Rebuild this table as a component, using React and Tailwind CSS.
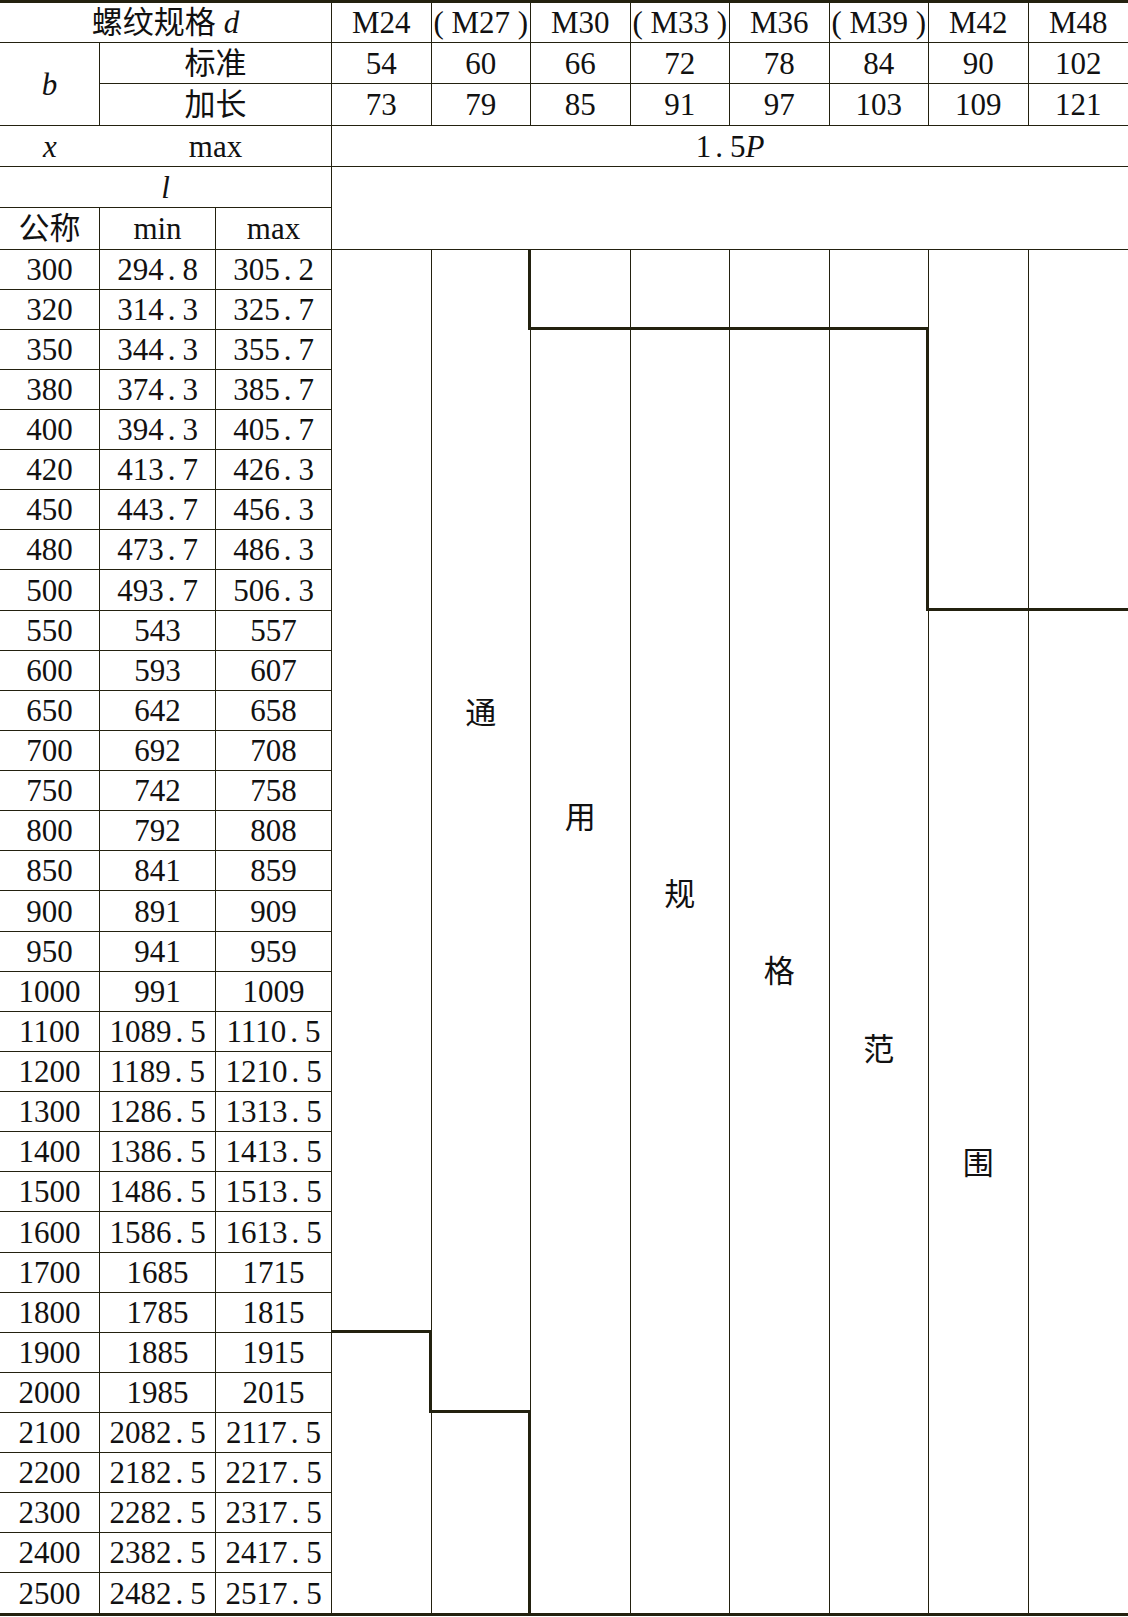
import React from "react";

const rows = [
  [300, "294.8", "305.2"],
  [320, "314.3", "325.7"],
  [350, "344.3", "355.7"],
  [380, "374.3", "385.7"],
  [400, "394.3", "405.7"],
  [420, "413.7", "426.3"],
  [450, "443.7", "456.3"],
  [480, "473.7", "486.3"],
  [500, "493.7", "506.3"],
  [550, "543", "557"],
  [600, "593", "607"],
  [650, "642", "658"],
  [700, "692", "708"],
  [750, "742", "758"],
  [800, "792", "808"],
  [850, "841", "859"],
  [900, "891", "909"],
  [950, "941", "959"],
  [1000, "991", "1009"],
  [1100, "1089.5", "1110.5"],
  [1200, "1189.5", "1210.5"],
  [1300, "1286.5", "1313.5"],
  [1400, "1386.5", "1413.5"],
  [1500, "1486.5", "1513.5"],
  [1600, "1586.5", "1613.5"],
  [1700, "1685", "1715"],
  [1800, "1785", "1815"],
  [1900, "1885", "1915"],
  [2000, "1985", "2015"],
  [2100, "2082.5", "2117.5"],
  [2200, "2182.5", "2217.5"],
  [2300, "2282.5", "2317.5"],
  [2400, "2382.5", "2417.5"],
  [2500, "2482.5", "2517.5"],
];

const sizes = ["M24", "( M27 )", "M30", "( M33 )", "M36", "( M39 )", "M42", "M48"];
const standard = ["54", "60", "66", "72", "78", "84", "90", "102"];
const longer = ["73", "79", "85", "91", "97", "103", "109", "121"];

// numbers in the source use a wide decimal point
const Num = ({ value }) => {
  const parts = String(value).split(".");
  if (parts.length < 2) return <span>{value}</span>;
  return (
    <span className="whitespace-nowrap">
      {parts[0]}
      <span className="ml-[4px] mr-[7px]">.</span>
      {parts[1]}
    </span>
  );
};

const cell = "flex items-center justify-center whitespace-nowrap border-[#23210f]";

const App = () => {
  return (
    <div className="w-[1128px] h-[1617px] bg-white text-[#111] font-['Liberation_Serif','Noto_Sans_CJK_SC',serif] text-[31px] leading-none">
      <div className="grid grid-cols-[100px_116px_116px_repeat(8,1fr)] grid-rows-[40px_41px_42px_41px_41px_42px_repeat(8,40px)_41px_repeat(7,40px)_41px_repeat(7,40px)_41px_repeat(9,40px)] border-t-[3px] border-b-[3px] border-[#23210f]">
        {/* header */}
        <div className={`${cell} col-span-3 border-r border-b`}>
          螺纹规格 <span className="italic ml-[8px]">d</span>
        </div>
        {sizes.map((s, i) => (
          <div key={"s" + i} className={`${cell} border-b ${i === 7 ? "" : "border-r"}`}>
            {s}
          </div>
        ))}

        <div className={`${cell} row-span-2 border-r border-b italic`}>b</div>
        <div className={`${cell} col-span-2 border-r border-b`}>标准</div>
        {standard.map((v, i) => (
          <div key={"b" + i} className={`${cell} border-b ${i === 7 ? "" : "border-r"}`}>
            {v}
          </div>
        ))}
        <div className={`${cell} col-span-2 border-r border-b`}>加长</div>
        {longer.map((v, i) => (
          <div key={"l" + i} className={`${cell} border-b ${i === 7 ? "" : "border-r"}`}>
            {v}
          </div>
        ))}

        <div className={`${cell} border-b italic`}>x</div>
        <div className={`${cell} col-span-2 border-r border-b`}>max</div>
        <div className={`${cell} col-span-8 border-b`}>
          <span className="whitespace-nowrap">
            1<span className="ml-[4px] mr-[7px]">.</span>5<span className="italic">P</span>
          </span>
        </div>

        <div className={`${cell} col-span-3 border-r border-b italic`}>l</div>
        <div className={`${cell} col-span-8 row-span-2 border-b`} />
        <div className={`${cell} border-r border-b`}>公称</div>
        <div className={`${cell} border-r border-b`}>min</div>
        <div className={`${cell} border-r border-b`}>max</div>

        {/* range columns, split where the thick boundary runs */}
        <div className="col-start-4 row-start-7 row-span-27 border-r border-b-[3px] border-[#23210f]" />
        <div className="col-start-4 row-start-34 row-span-2 border-r-[3px] border-[#23210f]" />
        <div className="col-start-4 row-start-36 row-span-5 border-r border-[#23210f]" />

        <div className="col-start-5 row-start-7 row-span-2 border-r-[3px] border-[#23210f]" />
        <div className="col-start-5 row-start-9 row-span-27 flex justify-center pt-[368px] border-r border-b-[3px] border-[#23210f]">
          <span className="h-[31px]">通</span>
        </div>
        <div className="col-start-5 row-start-36 row-span-5 border-r-[3px] border-[#23210f]" />

        <div className="col-start-6 row-start-7 row-span-2 border-r border-b-[3px] border-[#23210f]" />
        <div className="col-start-6 row-start-9 row-span-32 flex justify-center pt-[472px] border-r border-[#23210f]">
          <span className="h-[31px]">用</span>
        </div>

        <div className="col-start-7 row-start-7 row-span-2 border-r border-b-[3px] border-[#23210f]" />
        <div className="col-start-7 row-start-9 row-span-32 flex justify-center pt-[549px] border-r border-[#23210f]">
          <span className="h-[31px]">规</span>
        </div>

        <div className="col-start-8 row-start-7 row-span-2 border-r border-b-[3px] border-[#23210f]" />
        <div className="col-start-8 row-start-9 row-span-32 flex justify-center pt-[626px] border-r border-[#23210f]">
          <span className="h-[31px]">格</span>
        </div>

        <div className="col-start-9 row-start-7 row-span-2 border-r border-b-[3px] border-[#23210f]" />
        <div className="col-start-9 row-start-9 row-span-7 border-r-[3px] border-[#23210f]" />
        <div className="col-start-9 row-start-16 row-span-25 flex justify-center pt-[423px] border-r border-[#23210f]">
          <span className="h-[31px]">范</span>
        </div>

        <div className="col-start-10 row-start-7 row-span-9 border-r border-b-[3px] border-[#23210f]" />
        <div className="col-start-10 row-start-16 row-span-25 flex justify-center pt-[537px] border-r border-[#23210f]">
          <span className="h-[31px]">围</span>
        </div>

        <div className="col-start-11 row-start-7 row-span-9 border-b-[3px] border-[#23210f]" />
        <div className="col-start-11 row-start-16 row-span-25" />

        {/* l values */}
        {rows.map((r, i) =>
          r.map((v, j) => (
            <div
              key={"r" + i + "-" + j}
              className={`${cell} border-r ${i === rows.length - 1 ? "" : "border-b"}`}
            >
              <Num value={v} />
            </div>
          ))
        )}
      </div>
    </div>
  );
};

export default App;
